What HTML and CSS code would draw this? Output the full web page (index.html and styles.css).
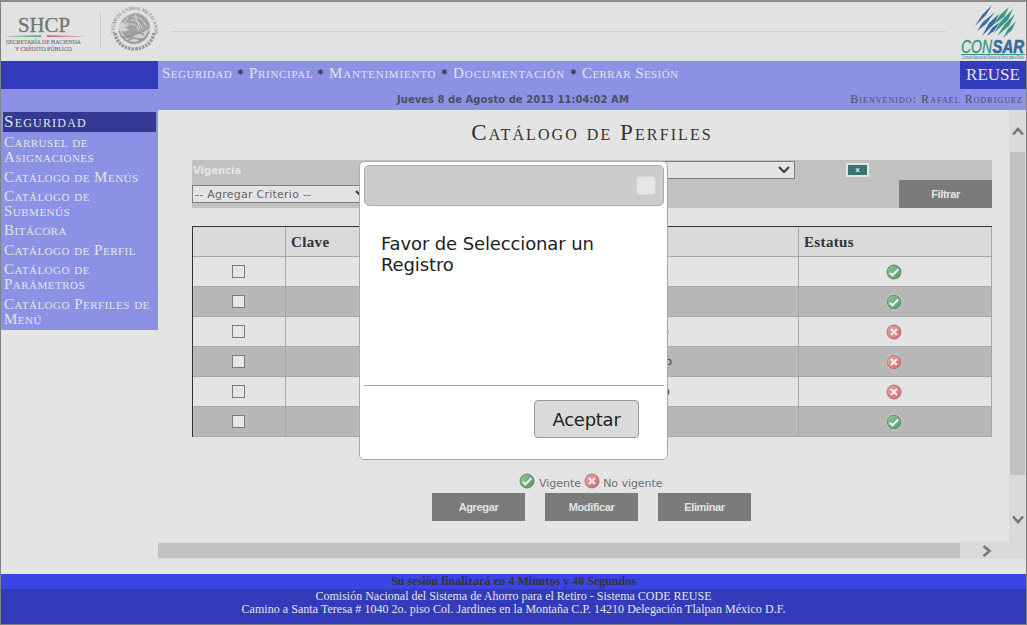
FILE: index.html
```
<!DOCTYPE html>
<html lang="es">
<head>
<meta charset="utf-8">
<title>Catálogo de Perfiles</title>
<link rel="stylesheet" href="styles.css">
</head>
<body>
<svg width="0" height="0" class="defs">
  <defs>
    <linearGradient id="gg" x1="0" y1="0" x2="1" y2="1"><stop offset="0" stop-color="#94c59d"/><stop offset="1" stop-color="#509963"/></linearGradient>
    <linearGradient id="rg" x1="0" y1="0" x2="1" y2="1"><stop offset="0" stop-color="#e5aaa7"/><stop offset="1" stop-color="#d56766"/></linearGradient>
    <symbol id="ok" viewBox="0 0 16 16"><circle cx="8" cy="8" r="7.9" fill="#e5e7e5"/><circle cx="8" cy="8" r="7" fill="url(#gg)" stroke="#5b7d62" stroke-width=".9"/><path d="M3.8 8.8 6.5 11.2 12.3 5.2" fill="none" stroke="#edf1ed" stroke-width="2.1"/></symbol>
    <symbol id="no" viewBox="0 0 16 16"><circle cx="8" cy="8" r="7.9" fill="#e5e3e3"/><circle cx="8" cy="8" r="7" fill="url(#rg)" stroke="#a96b6b" stroke-width=".9"/><path d="M5 5 11 11M11 5 5 11" fill="none" stroke="#f0eaea" stroke-width="2.3"/></symbol>
  </defs>
</svg>
<div class="window">
  <header class="banner">
    <svg class="gov" width="160" height="59" viewBox="1 2 160 59">
      <text x="18" y="32" class="shcp" textLength="52" lengthAdjust="spacingAndGlyphs">SHCP</text>
      <path d="M3 36.3 41 35.2V37Z" fill="#4fa277"/><path d="M47 35.2 86 36.3 47 37Z" fill="#cf6079"/>
      <text x="6" y="44" class="shsub" textLength="75" lengthAdjust="spacingAndGlyphs">SECRETARÍA DE HACIENDA</text>
      <text x="15" y="50.6" class="shsub" textLength="57" lengthAdjust="spacingAndGlyphs">Y CRÉDITO PÚBLICO</text>
      <path d="M100.5 12V47" stroke="#c8c8c8"/>
      <path id="ring" d="M114.800 33.500A20 20 0 1 1 154.200 33.500" fill="none"/>
      <text class="ringtext"><textPath href="#ring" textLength="70" lengthAdjust="spacingAndGlyphs">ESTADOS UNIDOS MEXICANOS</textPath></text>
      <path d="M115 33Q118 48 134 49Q151 48 154 33" fill="none" stroke="#999" stroke-width="3.500" stroke-dasharray="2.500 1"/>
      <circle cx="134.500" cy="29" r="16" fill="#d0d0d0"/>
      <path d="M121 22Q128 13 138 13Q150 17 150 28Q144 34 137 33L132 38Q125 38 123 32L129 30 125 27 130 25 126 24Z" fill="#a3a3a3"/>
      <path d="M133 17Q142 16 146 26M131 20Q138 19 143 29M130 24Q136 23 139 31M128 17l-4 5 5 2M135 15l5 14" fill="none" stroke="#d8d8d8" stroke-width="1"/>
      <path d="M119 31Q123 42 134 43Q146 42 149 31M122 31q5 8 12 4t10 0M127 41q7-6 14 0M121 36q6 3 10 0M139 39q5 1 7-3" fill="none" stroke="#959595" stroke-width="1.400"/>
    </svg>
    <div class="rule"></div>
    <svg class="consar" width="66" height="59" viewBox="960 2 66 59">
      <g fill="#356b9f"><path d="M992 5 986 15 975 26 982 15Z"/><path d="M995 12 986 24 977 31 983 22Z"/><path d="M999 14 994 24 982 36 989 23Z"/><path d="M1000 22 994 31 987 36 992 28Z"/></g>
      <g fill="#359681"><path d="M1009 7 1004 17 993 25 1000 15Z"/><path d="M1013 9 1008 20 994 33 1001 21Z"/><path d="M1015 14 1009 26 997 36 1005 24Z"/><path d="M1016 21 1012 30 1003 38 1008 29Z"/></g>
      <text x="961" y="52.500" class="con" textLength="31" lengthAdjust="spacingAndGlyphs">CON</text>
      <text x="992.500" y="52.500" class="sar" textLength="31.500" lengthAdjust="spacingAndGlyphs">SAR</text>
      <path d="M961 54.500H1025" stroke="#359681"/>
      <text x="962" y="59" class="consub" textLength="62" lengthAdjust="spacingAndGlyphs">Comisión Nacional del Sistema de Ahorro para el Retiro</text>
    </svg>
  </header>
  <nav class="nav">
    <div class="nav-row">
      <div class="brand-block"></div>
      <div class="links"><a class="l1">Seguridad</a><b>*</b><a class="l2">Principal</a><b>*</b><a class="l3">Mantenimiento</a><b>*</b><a class="l4">Documentación</a><b>*</b><a class="l5">Cerrar Sesión</a></div>
      <div class="reuse">REUSE</div>
    </div>
    <div class="info-row"><span class="date">Jueves 8 de Agosto de 2013 11:04:02 AM</span><span class="welcome">Bienvenido: Rafael Rodriguez</span></div>
  </nav>
  <div class="middle">
    <aside class="side">
      <h2>Seguridad</h2>
      <a>Carrusel de<br>Asignaciones</a>
      <a>Catálogo de Menús</a>
      <a>Catálogo de<br>Submenús</a>
      <a>Bitácora</a>
      <a>Catálogo de Perfil</a>
      <a>Catálogo de<br>Parámetros</a>
      <a>Catálogo Perfiles de<br>Menú</a>
    </aside>
    <div class="frame">
      <div class="frame-top">
        <main class="content">
          <h1>Catálogo de Perfiles</h1>
          <section class="filter">
            <div class="filter-left"><label>Vigencia</label><div class="select crit">-- Agregar Criterio --<svg width="12" height="8" viewBox="0 0 12 8"><path d="M1 1 6 6 11 1" fill="none" stroke="#3c3c3c" stroke-width="2"/></svg></div></div>
            <div class="select value"><svg width="12" height="8" viewBox="0 0 12 8"><path d="M1 1 6 6 11 1" fill="none" stroke="#3c3c3c" stroke-width="2"/></svg></div>
            <button class="remove">x</button>
            <button class="btn filtrar">Filtrar</button>
          </section>
          <div class="table">
            <div class="row head"><div></div><div>Clave</div><div>Estatus</div></div>
            <div class="row"><div><i class="check"></i></div><div></div><div><svg class="st"><use href="#ok"/></svg></div></div>
            <div class="row alt"><div><i class="check"></i></div><div></div><div><svg class="st"><use href="#ok"/></svg></div></div>
            <div class="row"><div><i class="check"></i></div><div class="d1">o</div><div><svg class="st"><use href="#no"/></svg></div></div>
            <div class="row alt"><div><i class="check"></i></div><div class="d2">o</div><div><svg class="st"><use href="#no"/></svg></div></div>
            <div class="row"><div><i class="check"></i></div><div class="d3">o</div><div><svg class="st"><use href="#no"/></svg></div></div>
            <div class="row alt"><div><i class="check"></i></div><div></div><div><svg class="st"><use href="#ok"/></svg></div></div>
          </div>
          <div class="legend"><svg class="st"><use href="#ok"/></svg><span class="vig">Vigente</span><svg class="st"><use href="#no"/></svg><span>No vigente</span></div>
          <div class="actions"><button class="btn">Agregar</button><button class="btn">Modificar</button><button class="btn">Eliminar</button></div>
        </main>
        <div class="vbar"><svg width="12" height="10" viewBox="0 0 12 10"><path d="M1 8.500 6 3 11 8.500" fill="none" stroke="#777" stroke-width="2.600"/></svg><div class="vthumb"></div><svg width="12" height="10" viewBox="0 0 12 10"><path d="M1 1.500 6 7 11 1.500" fill="none" stroke="#777" stroke-width="2.600"/></svg></div>
      </div>
      <div class="hbar"><div class="hthumb"></div><svg width="10" height="12" viewBox="0 0 10 12"><path d="M1.500 1 7.500 6 1.500 11" fill="none" stroke="#777" stroke-width="2.600"/></svg></div>
    </div>
  </div>
  <footer>
    <div class="session"><span>Su sesión finalizará en 4 Minutos y 40 Segundos</span></div>
    <div class="address"><span class="a1">Comisión Nacional del Sistema de Ahorro para el Retiro - Sistema CODE REUSE</span><span class="a2">Camino a Santa Teresa # 1040 2o. piso Col. Jardines en la Montaña C.P. 14210 Delegación Tlalpan México D.F.</span></div>
  </footer>
</div>
<div class="dialog" role="dialog">
  <div class="dialog-title"><i></i></div>
  <p>Favor de Seleccionar un<br>Registro</p>
  <div class="dialog-buttons"><button>Aceptar</button></div>
</div>
</body>
</html>
```
FILE: styles.css
```
* { box-sizing: border-box; }
body { margin: 0; font-family: "DejaVu Sans", sans-serif; white-space: nowrap; overflow: hidden; }
button { border: 0; margin: 0; padding: 0; }
.defs { position: absolute; }
.window { width: 1027px; height: 625px; background: #e4e4e4; border: 1px solid #818181; border-top: 2px solid #8b8b8b; display: flex; flex-direction: column; }
.banner { height: 59px; display: flex; align-items: flex-start; background: #e2e2e2; flex: none; }
.gov, .consar { display: block; flex: none; overflow: visible; }
.shcp { font: 20px "Liberation Serif", serif; fill: #747474; stroke: #747474; stroke-width: .3px; }
.shsub { font: 5.6px "Liberation Serif", serif; fill: #777; stroke: #777; stroke-width: .15px; }
.ringtext { font: bold 5px "Liberation Serif", serif; fill: #8d8d8d; }
.con { font: italic 18px "Liberation Sans", sans-serif; fill: #359681; stroke: #359681; stroke-width: .3px; }
.sar { font: italic bold 18px "Liberation Sans", sans-serif; fill: #356b9f; stroke: #356b9f; stroke-width: .6px; }
.consub { font: 4.5px "Liberation Sans", sans-serif; fill: #356b9f; }
.rule { width: 775px; height: 1px; background: #d2d2d2; margin: 29px 14px 0 10px; flex: none; }
.nav { height: 49px; background: #8b91e5; flex: none; }
.nav-row { display: flex; height: 28px; }
.brand-block { width: 157px; background: #343bbb; flex: none; }
.links { flex: 1; display: flex; padding-left: 4px; line-height: 25px; font-family: "Liberation Serif", serif; font-size: 15px; font-variant: small-caps; color: #e2e2e8; }
.l1 { width: 70px; letter-spacing: .5px; }
.l2 { width: 63px; letter-spacing: .7px; }
.l3 { width: 107px; letter-spacing: .8px; }
.l4 { width: 112px; letter-spacing: 1px; }
.l5 { letter-spacing: .4px; }
.links b { width: 17px; text-align: center; color: #333; font-family: "DejaVu Sans", sans-serif; font-size: 12px; line-height: 26px; }
.reuse { width: 66px; background: #343bbb; color: #e4e4e4; font: 17px/28px "Liberation Serif", serif; text-align: center; }
.info-row { display: flex; height: 21px; padding: 0 3px 0 396px; justify-content: space-between; line-height: 21px; color: #4b4f60; }
.date { font-size: 10px; font-weight: bold; letter-spacing: .03px; }
.welcome { font-family: "Liberation Serif", serif; font-variant: small-caps; font-size: 12px; letter-spacing: 1.05px; }
.middle { height: 464px; display: flex; flex: none; align-items: flex-start; }
.side { width: 157px; height: 220px; background: #8b91e5; padding: 2px 2px 0; font-family: "Liberation Serif", serif; font-variant: small-caps; color: #e4e4e4; flex: none; }
.side h2 { margin: 0 0 1px; height: 20px; background: #343a93; font-size: 17px; font-weight: normal; line-height: 20px; padding-left: 1px; letter-spacing: 1.2px; }
.side a { display: block; padding: 2px 1px; font-size: 15px; line-height: 15.3px; letter-spacing: .5px; }
.frame { width: 868px; }
.frame-top { height: 432px; display: flex; }
.content { width: 851px; padding: 0 17px 0 34px; }
h1 { margin: 0; height: 50px; font: 23px/46px "Liberation Serif", serif; font-variant: small-caps; letter-spacing: 2.1px; color: #333; text-align: center; }
.filter { height: 48px; background: #c1c1c1; display: flex; }
.filter-left { width: 180px; padding-top: 3px; }
.filter-left label { display: block; height: 22px; line-height: 16px; padding-left: 1px; font-size: 10px; font-weight: bold; color: #e6e6e6; }
.select { height: 18px; border: 1px solid #7d7d7d; background: #e4e4e4; display: flex; align-items: center; justify-content: space-between; padding: 0 4px 0 2px; color: #666; font-size: 11px; letter-spacing: .25px; }
.select.value { width: 303px; margin: 1px 0 0 120px; justify-content: flex-end; }
.remove { width: 23px; height: 14px; border: 2px solid #e4e4e4; background: #357473; color: #e4e4e4; font: bold 7px/9px "DejaVu Sans", sans-serif; margin: 3px 0 0 51px; }
.btn { width: 93px; height: 28px; background: #7b7b7b; color: #e4e4e4; font: bold 11px/26px "Liberation Sans", sans-serif; letter-spacing: -.35px; }
.filtrar { margin: 20px 0 0 30px; }
.table { margin-top: 18px; border-left: 1px solid #333; border-top: 1px solid #333; }
.row { display: grid; grid-template-columns: 93px 513px 193px; height: 30px; }
.row.alt { background: #b8b8b8; }
.row.head { background: #dadada; }
.row > div { border-right: 1px solid #a8a8a8; border-bottom: 1px solid #a8a8a8; display: flex; align-items: center; justify-content: center; padding-right: 2px; }
.row.head > div { justify-content: flex-start; padding-left: 5px; padding-top: 1px; font: bold 15px "Liberation Serif", serif; letter-spacing: .35px; color: #333; }
.row > .d1, .row > .d2, .row > .d3 { justify-content: flex-end; font-size: 11px; color: #24415c; padding-right: 128px; }
.row > .d1 { padding-right: 129px; color: #3b8cc8; }
.row > .d2 { padding-right: 126px; }
.check { width: 13px; height: 13px; border: 1px solid #7b7b7b; background: #e6e6e6; }
.st { width: 16px; height: 16px; display: block; flex: none; }
.legend { display: flex; margin: 36px 0 0 327px; height: 20px; font-size: 11px; color: #6c6c6c; }
.legend span { line-height: 22px; margin-left: 4px; }
.legend span:last-child { margin-left: 3px; letter-spacing: -.05px; }
.legend .vig { margin-right: 3px; }
.actions { display: flex; gap: 20px; padding-left: 240px; }
.vbar { width: 17px; background: #dadada; display: flex; flex-direction: column; align-items: center; justify-content: space-between; padding: 16px 0 17px; }
.vthumb { width: 15px; height: 323px; background: #c1c1c1; margin-top: -24px; }
.hbar { height: 17px; background: #dadada; display: flex; align-items: center; }
.hthumb { width: 802px; height: 15px; background: #c1c1c1; margin-right: 22px; }
footer { font-family: "Liberation Serif", serif; font-size: 12px; text-align: center; flex: 1; display: flex; flex-direction: column; }
.session { height: 15px; line-height: 15px; background: #3a46e4; color: #333; font-weight: bold; }
.address { flex: 1; background: #343bbb; color: #e4e4e4; display: flex; flex-direction: column; line-height: 13px; padding-top: 1px; }
.a2 { letter-spacing: .04px; }
.dialog { position: absolute; left: 359px; top: 161px; width: 309px; height: 299px; background: #fff; border: 1px solid #aaa; border-radius: 5px; padding: 3px 3px 3px 4px; color: #222; font-size: 18px; letter-spacing: -.12px; }
.dialog-title { height: 41px; background: #ccc; border: 1px solid #aaa; border-radius: 5px; display: flex; justify-content: flex-end; padding: 10px 7px; }
.dialog-title i { width: 20px; height: 19px; background: #e6e6e6; border: 1px solid #d6d6d6; border-radius: 4px; }
.dialog p { margin: 27px 0 0 17px; height: 152px; line-height: 21px; }
.dialog-buttons { border-top: 1px solid #aaa; padding: 14px 25px 0 0; text-align: right; }
.dialog-buttons button { width: 105px; height: 38px; border: 1px solid #999; border-radius: 4px; background: #dadada; font: 18px "DejaVu Sans", sans-serif; letter-spacing: -.25px; color: #222; }
```
